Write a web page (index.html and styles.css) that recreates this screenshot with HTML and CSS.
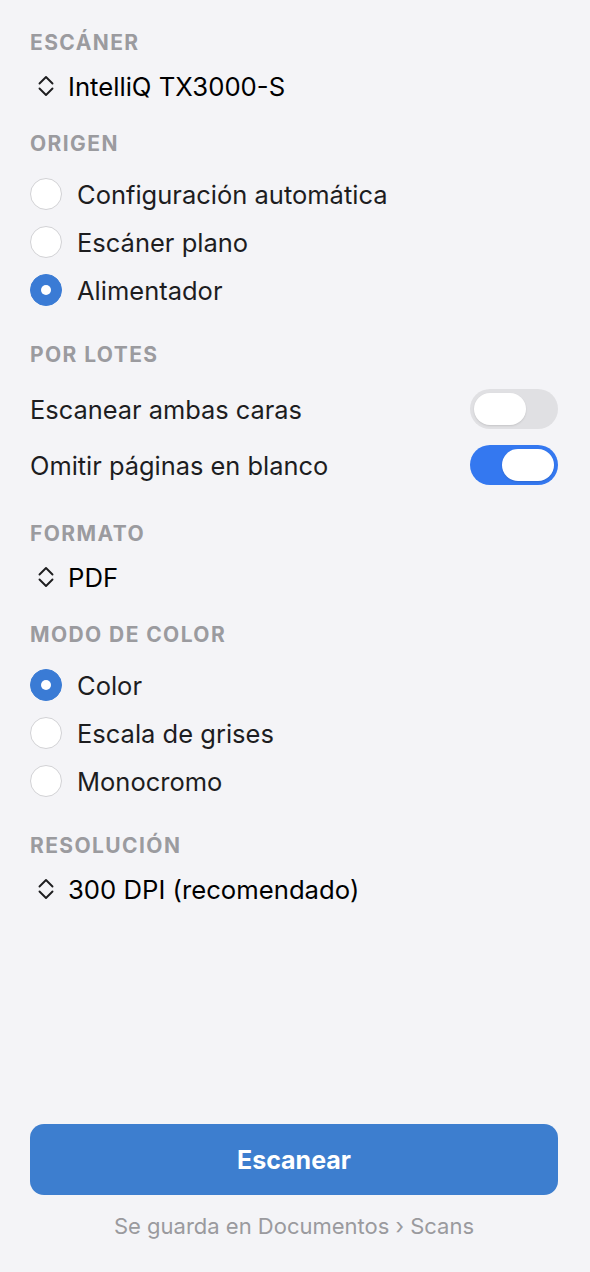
FILE: index.html
```html
<!DOCTYPE html>
<html lang="es">
<head>
<meta charset="utf-8">
<title>Escáner</title>
<link rel="stylesheet" href="styles.css">
</head>
<body>
<main class="panel">
  <div class="settings">
    <section class="group">
      <h2 class="group-title">ESCÁNER</h2>
      <div class="picker">
        <svg class="chev" viewBox="0 0 18 24" width="18" height="24"><path d="M2.5 9.5 L9 3 L15.5 9.5 M2.5 14.5 L9 21 L15.5 14.5"/></svg>
        <span>IntelliQ TX3000-S</span>
      </div>
    </section>

    <section class="group">
      <h2 class="group-title">ORIGEN</h2>
      <ul class="radios">
        <li class="radio"><span class="dot"></span>Configuración automática</li>
        <li class="radio"><span class="dot"></span>Escáner plano</li>
        <li class="radio on"><span class="dot"></span>Alimentador</li>
      </ul>
    </section>

    <section class="group">
      <h2 class="group-title">POR LOTES</h2>
      <div class="toggle-row"><span>Escanear ambas caras</span><span class="switch"><span class="knob"></span></span></div>
      <div class="toggle-row"><span>Omitir páginas en blanco</span><span class="switch on"><span class="knob"></span></span></div>
    </section>

    <section class="group">
      <h2 class="group-title">FORMATO</h2>
      <div class="picker">
        <svg class="chev" viewBox="0 0 18 24" width="18" height="24"><path d="M2.5 9.5 L9 3 L15.5 9.5 M2.5 14.5 L9 21 L15.5 14.5"/></svg>
        <span>PDF</span>
      </div>
    </section>

    <section class="group">
      <h2 class="group-title">MODO DE COLOR</h2>
      <ul class="radios">
        <li class="radio on"><span class="dot"></span>Color</li>
        <li class="radio"><span class="dot"></span>Escala de grises</li>
        <li class="radio"><span class="dot"></span>Monocromo</li>
      </ul>
    </section>

    <section class="group">
      <h2 class="group-title">RESOLUCIÓN</h2>
      <div class="picker">
        <svg class="chev" viewBox="0 0 18 24" width="18" height="24"><path d="M2.5 9.5 L9 3 L15.5 9.5 M2.5 14.5 L9 21 L15.5 14.5"/></svg>
        <span>300 DPI (recomendado)</span>
      </div>
    </section>
  </div>

  <footer class="actions">
    <button class="scan-btn" type="button">Escanear</button>
    <p class="save-note">Se guarda en Documentos › Scans</p>
  </footer>
</main>
</body>
</html>
```

FILE: styles.css
```css
* { box-sizing: border-box; }

html, body {
  margin: 0;
  padding: 0;
  background: #f4f4f7;
}

body {
  font-family: Inter, "Noto Sans", "Liberation Sans", sans-serif;
  color: #1d1d1f;
}

.panel {
  min-height: 100vh;
  display: flex;
  flex-direction: column;
  padding: 27px 32px 34px 30px;
}

.settings {
  flex: 1;
  display: flex;
  flex-direction: column;
  gap: 25px;
}

.group {
  display: flex;
  flex-direction: column;
}

.group-title {
  margin: 0 0 10px 0;
  height: 32px;
  line-height: 32px;
  font-size: 21px;
  font-weight: 700;
  letter-spacing: 1.4px;
  color: #9b9b9f;
}

.picker {
  height: 34px;
  display: flex;
  align-items: center;
  gap: 13px;
  padding-left: 7px;
  font-size: 25.7px;
  font-weight: 400;
  color: #000;
}

.chev {
  flex: none;
  fill: none;
  stroke: #1d1d1f;
  stroke-width: 1.9;
  stroke-linecap: round;
  stroke-linejoin: round;
}

.radios {
  list-style: none;
  margin: 0;
  padding: 0;
}

.radio {
  height: 48px;
  display: flex;
  align-items: center;
  gap: 15px;
  font-size: 25.5px;
}

.dot {
  flex: none;
  width: 32px;
  height: 32px;
  border-radius: 50%;
  background: #fff;
  border: 1px solid #d2d2d5;
  display: flex;
  align-items: center;
  justify-content: center;
}

.radio.on .dot {
  background: #3a7bd5;
  border-color: #3a7bd5;
}

.radio.on .dot::after {
  content: "";
  width: 10px;
  height: 10px;
  border-radius: 50%;
  background: #fff;
}

.toggle-row {
  height: 56px;
  display: flex;
  align-items: center;
  justify-content: space-between;
  font-size: 25.4px;
}

.switch {
  width: 88px;
  height: 40px;
  border-radius: 20px;
  background: #e0e0e3;
  padding: 4px;
  display: flex;
}

.switch.on {
  background: #3478f0;
  justify-content: flex-end;
}

.knob {
  width: 52px;
  height: 32px;
  border-radius: 16px;
  background: #fff;
  box-shadow: 0 1px 2px rgba(0,0,0,0.12);
}

.actions {
  display: flex;
  flex-direction: column;
  align-items: stretch;
}

.scan-btn {
  height: 71px;
  border: none;
  border-radius: 14px;
  background: #3d7ecf;
  color: #fff;
  font-family: inherit;
  font-size: 25px;
  font-weight: 700;
}

.save-note {
  margin: 19px 0 0 0;
  line-height: 24px;
  text-align: center;
  font-size: 22px;
  color: #9a9a9e;
}
```
